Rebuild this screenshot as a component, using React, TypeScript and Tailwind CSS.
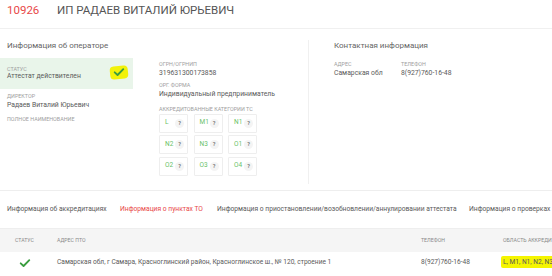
import React from "react";

const categories = ["L", "M1", "N1", "N2", "N3", "O1", "O2", "O3", "O4"];

const tabs = [
  { title: "Информация об аккредитациях", width: "w-[113px]", active: false },
  { title: "Информация о пунктах ТО", width: "w-[97px]", active: true },
  {
    title: "Информация о приостановлении/возобновлении/аннулировании аттестата",
    width: "w-[252px]",
    active: false,
  },
  { title: "Информация о проверках", width: "w-[120px]", active: false },
];

const CheckIcon = ({ className }: { className?: string }) => (
  <svg viewBox="0 0 16 14" className={className} fill="none">
    <path d="M2 7.5 L6 11.2 L14 3" stroke="#3a9d3f" strokeWidth="2.6" strokeLinecap="round" strokeLinejoin="round" />
  </svg>
);

const Label = ({ children }: { children: React.ReactNode }) => (
  <div className="text-[5.4px] leading-[7px] uppercase text-[#a0a0a0] whitespace-nowrap">{children}</div>
);

const Value = ({ children }: { children: React.ReactNode }) => (
  <div className="text-[6.8px] leading-[10px] text-[#5a5a5a] whitespace-nowrap">{children}</div>
);

const App = () => {
  return (
    <div
      className="w-[552px] h-[276px] overflow-hidden bg-white"
      style={{ fontFamily: "Roboto, 'Liberation Sans', sans-serif" }}
    >
      {/* header */}
      <div className="h-[29px] border-b border-[#f0f0f0] flex items-start pt-[3px] px-[7px] text-[11.5px] leading-[14px]">
        <span className="text-[#e84848] w-[50px]">10926</span>
        <span className="text-[#555]">ИП РАДАЕВ ВИТАЛИЙ ЮРЬЕВИЧ</span>
      </div>

      {/* operator info */}
      <div className="h-[162px] flex pt-[11px] pb-[6px] border-b border-[#eeeeee]">
        <div className="w-[309px] border-r border-[#f0f0f0]">
          <div className="px-[7px] text-[8px] leading-[12px] text-[#666]">Информация об операторе</div>
          <div className="flex">
            <div className="w-[133px]">
              <div className="mt-[6px] h-[31px] bg-[#e9f5ea] pl-[7px] pr-[5px] flex items-center justify-between">
                <div>
                  <Label>Статус</Label>
                  <div className="mt-[-2px]">
                    <Value>Аттестат действителен</Value>
                  </div>
                </div>
                <div className="relative w-[18px] h-[13px] mt-[-3px] flex items-center justify-center">
                  <span className="absolute inset-0 bg-[#f2f20a] rounded-[4px] -rotate-6" />
                  <CheckIcon className="relative w-[12px] h-[10px]" />
                </div>
              </div>
              <div className="px-[7px]">
                <div className="mt-[3.5px]">
                  <Label>Директор</Label>
                </div>
                <Value>Радаев Виталий Юрьевич</Value>
                <div className="mt-[6.5px]">
                  <Label>Полное наименование</Label>
                </div>
              </div>
            </div>
            <div className="ml-[26px]">
              <div className="mt-[8.5px]">
                <Label>ОГРН/ОГРНИП</Label>
              </div>
              <Value>319631300173858</Value>
              <div className="mt-[4.5px]">
                <Label>Орг. форма</Label>
              </div>
              <Value>Индивидуальный предприниматель</Value>
              <div className="mt-[6.5px]">
                <Label>Аккредитованные категории ТС</Label>
              </div>
              <div className="mt-[1px] grid grid-cols-[29px_29px_29px] gap-x-[5.5px] gap-y-[2.5px]">
                {categories.map((c) => (
                  <div
                    key={c}
                    className="h-[19px] border border-[#eeeeee] rounded-[1px] flex items-center justify-between pl-[5px] pr-[3px]"
                  >
                    <span className="text-[6.5px] text-[#6abf69]">{c}</span>
                    <span className="w-[9px] h-[9px] rounded-full bg-[#f4f4f4] text-[5.5px] font-bold text-[#777] flex items-center justify-center">
                      ?
                    </span>
                  </div>
                ))}
              </div>
            </div>
          </div>
        </div>
        <div className="pl-[25px]">
          <div className="text-[8px] leading-[12px] text-[#666]">Контактная информация</div>
          <div className="flex mt-[8.5px]">
            <div className="w-[67px]">
              <Label>Адрес</Label>
              <Value>Самарская обл</Value>
            </div>
            <div>
              <Label>Телефон</Label>
              <Value>8(927)760-16-48</Value>
            </div>
          </div>
        </div>
      </div>

      {/* tabs */}
      <div className="h-[38px] flex items-center pl-[7px] border-b border-[#eeeeee] whitespace-nowrap">
        {tabs.map((t) => (
          <div
            key={t.title}
            className={`${t.width} shrink-0 text-[6.7px] ${t.active ? "text-[#e84848]" : "text-[#5a5a5a]"}`}
          >
            {t.title}
          </div>
        ))}
      </div>

      {/* table */}
      <div className="h-[23px] bg-[#f5f5f5] grid grid-cols-[57px_364px_82px_200px] items-center text-[5.2px] uppercase text-[#8a8a8a] whitespace-nowrap">
        <div className="pl-[15px]">Статус</div>
        <div>Адрес ПТО</div>
        <div>Телефон</div>
        <div>Область аккредитации</div>
      </div>
      <div className="h-[22px] grid grid-cols-[57px_364px_80px_200px] items-center text-[6.6px] text-[#5a5a5a] whitespace-nowrap">
        <div className="pl-[19px] flex">
          <CheckIcon className="w-[12px] h-[10px]" />
        </div>
        <div>Самарская обл, г Самара, Красноглинский район, Красноглинское ш., № 120, строение 1</div>
        <div>8(927)760-16-48</div>
        <div>
          <span className="bg-[#f5f500] px-[2px] py-[2px] rounded-[2px]">L, M1, N1, N2, N3, O1, O2, O3, O4</span>
        </div>
      </div>
    </div>
  );
};

export default App;
